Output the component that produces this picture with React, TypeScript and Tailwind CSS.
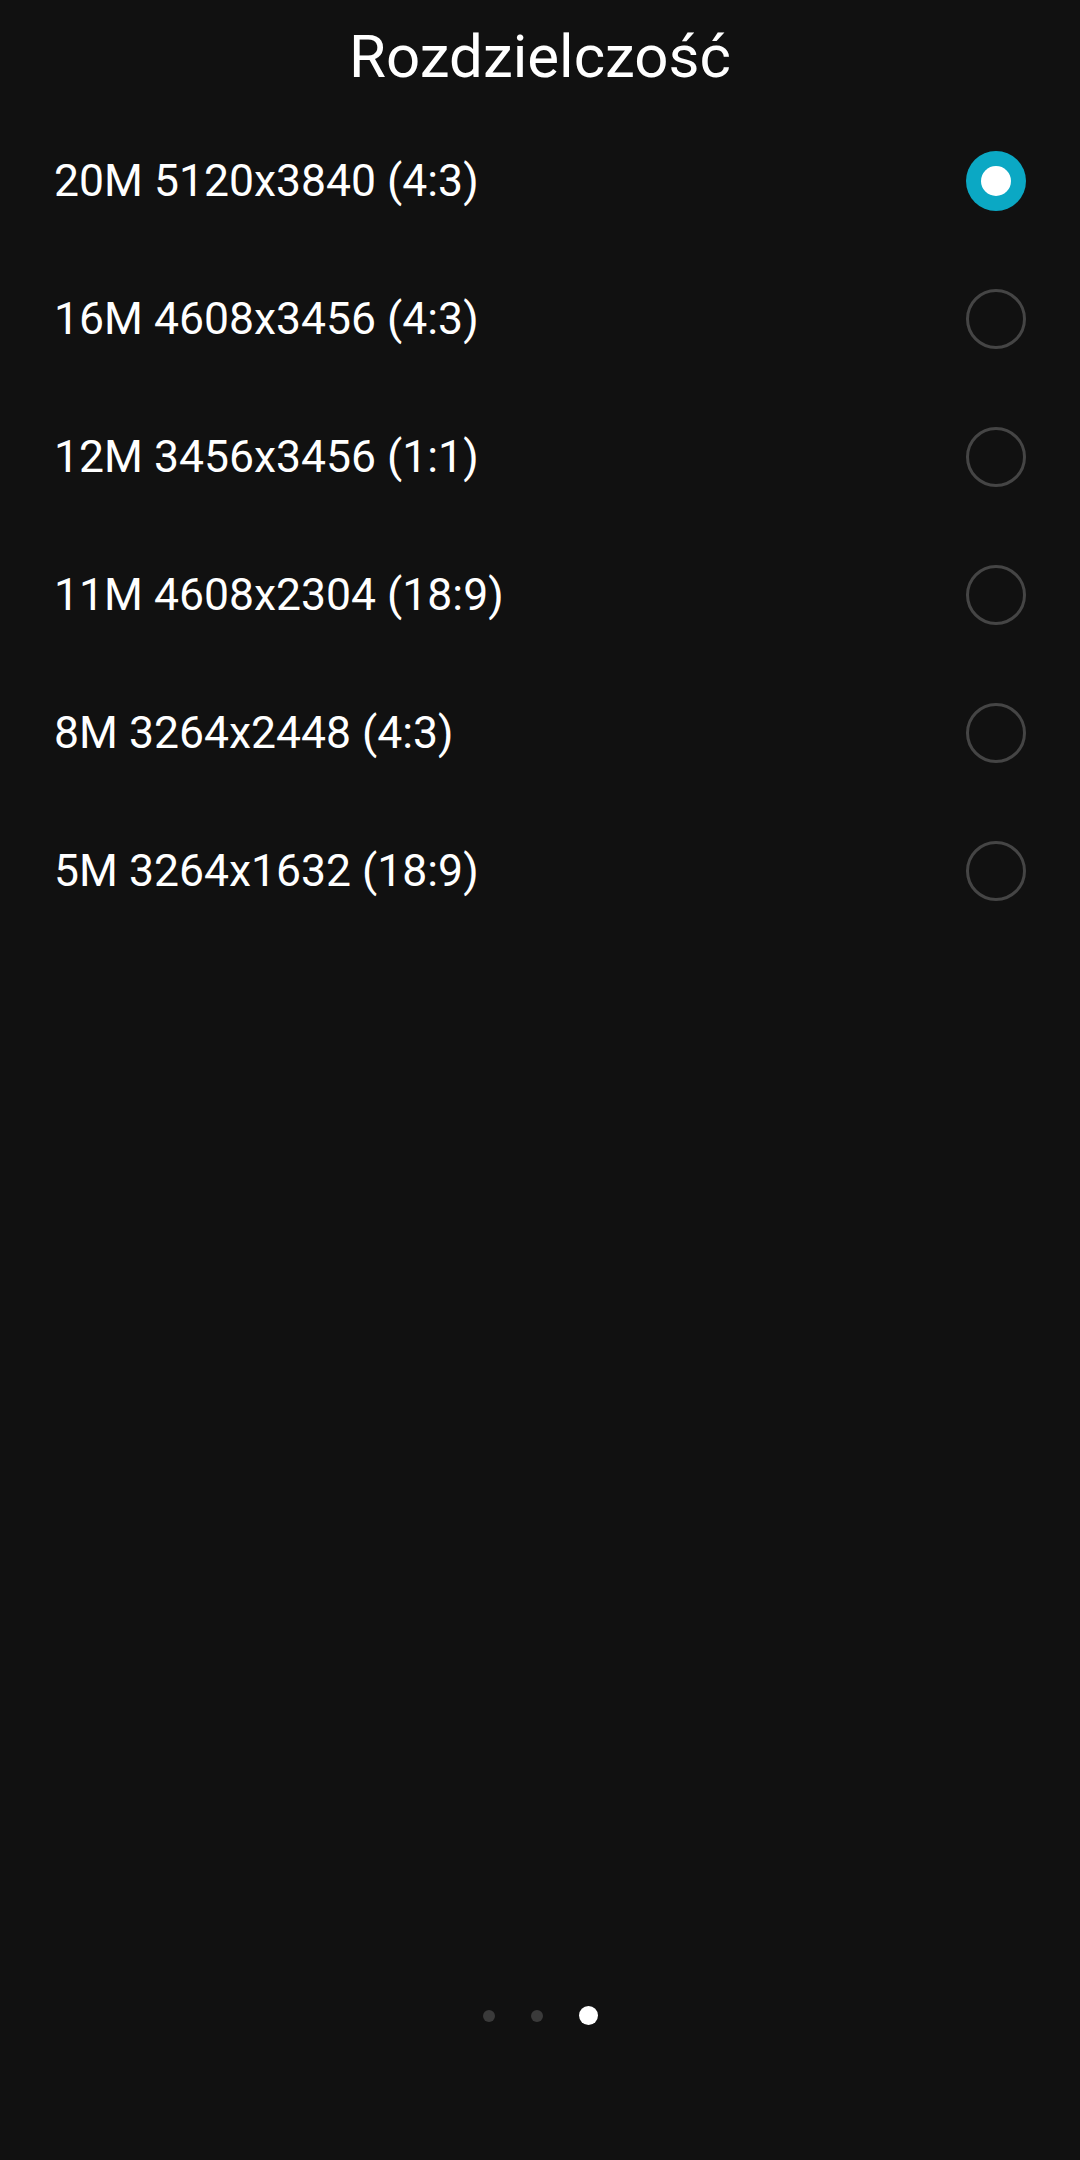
import React from "react";

const items = [
  "20M 5120x3840 (4:3)",
  "16M 4608x3456 (4:3)",
  "12M 3456x3456 (1:1)",
  "11M 4608x2304 (18:9)",
  "8M 3264x2448 (4:3)",
  "5M 3264x1632 (18:9)",
];

export default function App() {
  return (
    <div
      className="w-[1080px] h-[2160px] bg-[#111111] text-white flex flex-col"
      style={{ fontFamily: "Roboto, 'Noto Sans', sans-serif" }}
    >
      <div className="h-[112px] flex items-center justify-center pt-[2px]">
        <h1 className="text-[60px] font-normal leading-none">Rozdzielczość</h1>
      </div>
      <div className="flex flex-col">
        {items.map((t, i) => (
          <div key={t} className="h-[138px] flex items-center justify-between pl-[54px] pr-[54px]">
            <span className="text-[44.5px] leading-none">{t}</span>
            {i === 0 ? (
              <div className="w-[60px] h-[60px] rounded-full bg-[#0ba8c4] flex items-center justify-center">
                <div className="w-[30px] h-[30px] rounded-full bg-white" />
              </div>
            ) : (
              <div className="w-[60px] h-[60px] rounded-full border-[3px] border-[#454545]" />
            )}
          </div>
        ))}
      </div>
      <div className="flex-1" />
      <div className="h-[154px] flex items-start justify-center">
        <div className="flex items-center gap-[36px]">
          <div className="w-[12px] h-[12px] rounded-full bg-[#3a3a3a]" />
          <div className="w-[12px] h-[12px] rounded-full bg-[#3a3a3a]" />
          <div className="w-[19px] h-[19px] rounded-full bg-white" />
        </div>
      </div>
    </div>
  );
}
